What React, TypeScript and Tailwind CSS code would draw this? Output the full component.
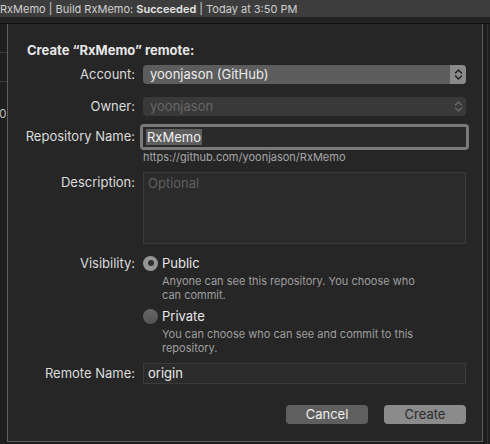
import React from "react";

const font = { fontFamily: "Inter, 'Helvetica Neue', 'Liberation Sans', sans-serif" };

function Stepper({ dim = false }: { dim?: boolean }) {
  return (
    <svg width="9" height="13" viewBox="0 0 9 13" fill="none">
      <path
        d="M1.5 5 L4.5 2 L7.5 5 M1.5 8 L4.5 11 L7.5 8"
        stroke={dim ? "#6a6a6a" : "#1e1e1e"}
        strokeWidth="1.4"
        strokeLinecap="round"
        strokeLinejoin="round"
      />
    </svg>
  );
}

function Label({ children, className = "" }: { children: React.ReactNode; className?: string }) {
  return (
    <div className={`w-[135px] shrink-0 pr-[8px] text-right text-[13px] text-[#dcdcdc] ${className}`}>
      {children}
    </div>
  );
}

export default function App() {
  return (
    <div className="relative flex h-[444px] w-[490px] flex-col overflow-hidden bg-[#1b1b1b]" style={font}>
      {/* titlebar */}
      <div className="flex h-[17px] shrink-0 items-center bg-[#3d3d3d] text-[11px] leading-[14px] text-[#cfcfcf] whitespace-nowrap">
        <span>
          RxMemo | Build RxMemo: <span className="font-semibold text-[#e4e4e4]">Succeeded</span> | Today at 3:50 PM
        </span>
      </div>
      <div className="h-[7px] shrink-0 border-b border-[#101010] bg-[#232323]" />

      <div className="flex flex-1">
        {/* left strip behind the sheet */}
        <div className="relative w-[7px] shrink-0 bg-[#1e1e1e]">
          <div className="mt-[28px] h-px bg-[#3a3a3a]" />
          <div className="mt-[28px] h-px bg-[#3a3a3a]" />
          <div className="absolute left-[-1px] top-[81px] text-[12px] text-[#bdbdbd]">0</div>
        </div>

        {/* sheet */}
        <div className="mb-[2px] flex flex-1 flex-col border-x border-b border-[#5e5e5e] bg-[#262626]">
          <div className="ml-[19px] mt-[18px] text-[13px] font-bold leading-[16px] text-[#e6e6e6]">
            Create “RxMemo” remote:
          </div>

          {/* account */}
          <div className="mt-[7px] flex items-center pr-[16px]">
            <Label>Account:</Label>
            <div className="flex h-[19px] flex-1 items-center overflow-hidden rounded-[4px] bg-[#5d5d5d]">
              <span className="flex-1 pl-[7px] text-[13px] text-[#ececec]">yoonjason (GitHub)</span>
              <div className="flex h-full w-[16px] items-center justify-center bg-[#8a8a8a]">
                <Stepper />
              </div>
            </div>
          </div>

          {/* owner */}
          <div className="mt-[12px] flex items-center pr-[16px]">
            <Label>Owner:</Label>
            <div className="flex h-[19px] flex-1 items-center rounded-[4px] bg-[#393939]">
              <span className="flex-1 pl-[7px] text-[13px] text-[#666]">yoonjason</span>
              <div className="flex w-[16px] justify-center">
                <Stepper dim />
              </div>
            </div>
          </div>

          {/* repo name */}
          <div className="mt-[8px] flex items-center pr-[13px]">
            <Label>Repository Name:</Label>
            <div className="-ml-[3px] flex-1 rounded-[4px] border-[3px] border-[#7a7a7a]">
              <div className="flex h-[20px] items-center bg-[#2a2a2a] pl-[3px]">
                <span className="bg-[#5e5e5e] px-px text-[13px] leading-[16px] text-[#f0f0f0]">RxMemo</span>
              </div>
            </div>
          </div>
          <div className="ml-[135px] mt-[1px] text-[11px] leading-[13px] text-[#a6a6a6]">
            https://github.com/yoonjason/RxMemo
          </div>

          {/* description */}
          <div className="mt-[8px] flex items-start pr-[16px]">
            <Label className="pt-[1px]">Description:</Label>
            <div className="h-[72px] flex-1 border border-[#3b3b3b] bg-[#2b2b2b] pl-[4px] pt-[1px] text-[13px] text-[#5f5f5f]">
              Optional
            </div>
          </div>

          {/* visibility */}
          <div className="mt-[11px] flex items-start pr-[16px]">
            <Label className="leading-[16px]">Visibility:</Label>
            <div className="flex flex-1 flex-col">
              <div className="flex items-center gap-[4px]">
                <div className="flex h-[15px] w-[15px] items-center justify-center rounded-full bg-[#959595]">
                  <div className="h-[6px] w-[6px] rounded-full bg-[#2e2e2e]" />
                </div>
                <span className="text-[13px] leading-[16px] text-[#e8e8e8]">Public</span>
              </div>
              <div className="ml-[19px] mt-[3px] text-[11px] leading-[14px] text-[#9e9e9e]">
                Anyone can see this repository. You choose who
                <br />
                can commit.
              </div>
              <div className="mt-[6px] flex items-center gap-[4px]">
                <div className="h-[15px] w-[15px] rounded-full bg-gradient-to-b from-[#666] to-[#555]" />
                <span className="text-[13px] leading-[16px] text-[#e8e8e8]">Private</span>
              </div>
              <div className="ml-[19px] mt-[3px] text-[11px] leading-[14px] text-[#9e9e9e]">
                You can choose who can see and commit to this
                <br />
                repository.
              </div>
            </div>
          </div>

          {/* remote name */}
          <div className="mt-[8px] flex items-center pr-[16px]">
            <Label>Remote Name:</Label>
            <div className="flex h-[21px] flex-1 items-center border border-[#3b3b3b] bg-[#2b2b2b] pl-[4px] text-[13px] text-[#ececec]">
              origin
            </div>
          </div>

          {/* buttons */}
          <div className="mt-[21px] flex justify-end gap-[16px] pr-[16px]">
            <button className="h-[19px] w-[82px] rounded-[4px] bg-[#5f5f5f] text-[13px] text-[#eeeeee]">
              Cancel
            </button>
            <button className="h-[19px] w-[82px] rounded-[4px] bg-[#8b8b8b] text-[13px] text-[#2c2c2c]">
              Create
            </button>
          </div>
        </div>

        {/* right strip */}
        <div className="flex w-[7px] shrink-0 bg-[#1e1e1e]">
          <div className="ml-[4px] w-px bg-[#333]" />
        </div>
      </div>
    </div>
  );
}
